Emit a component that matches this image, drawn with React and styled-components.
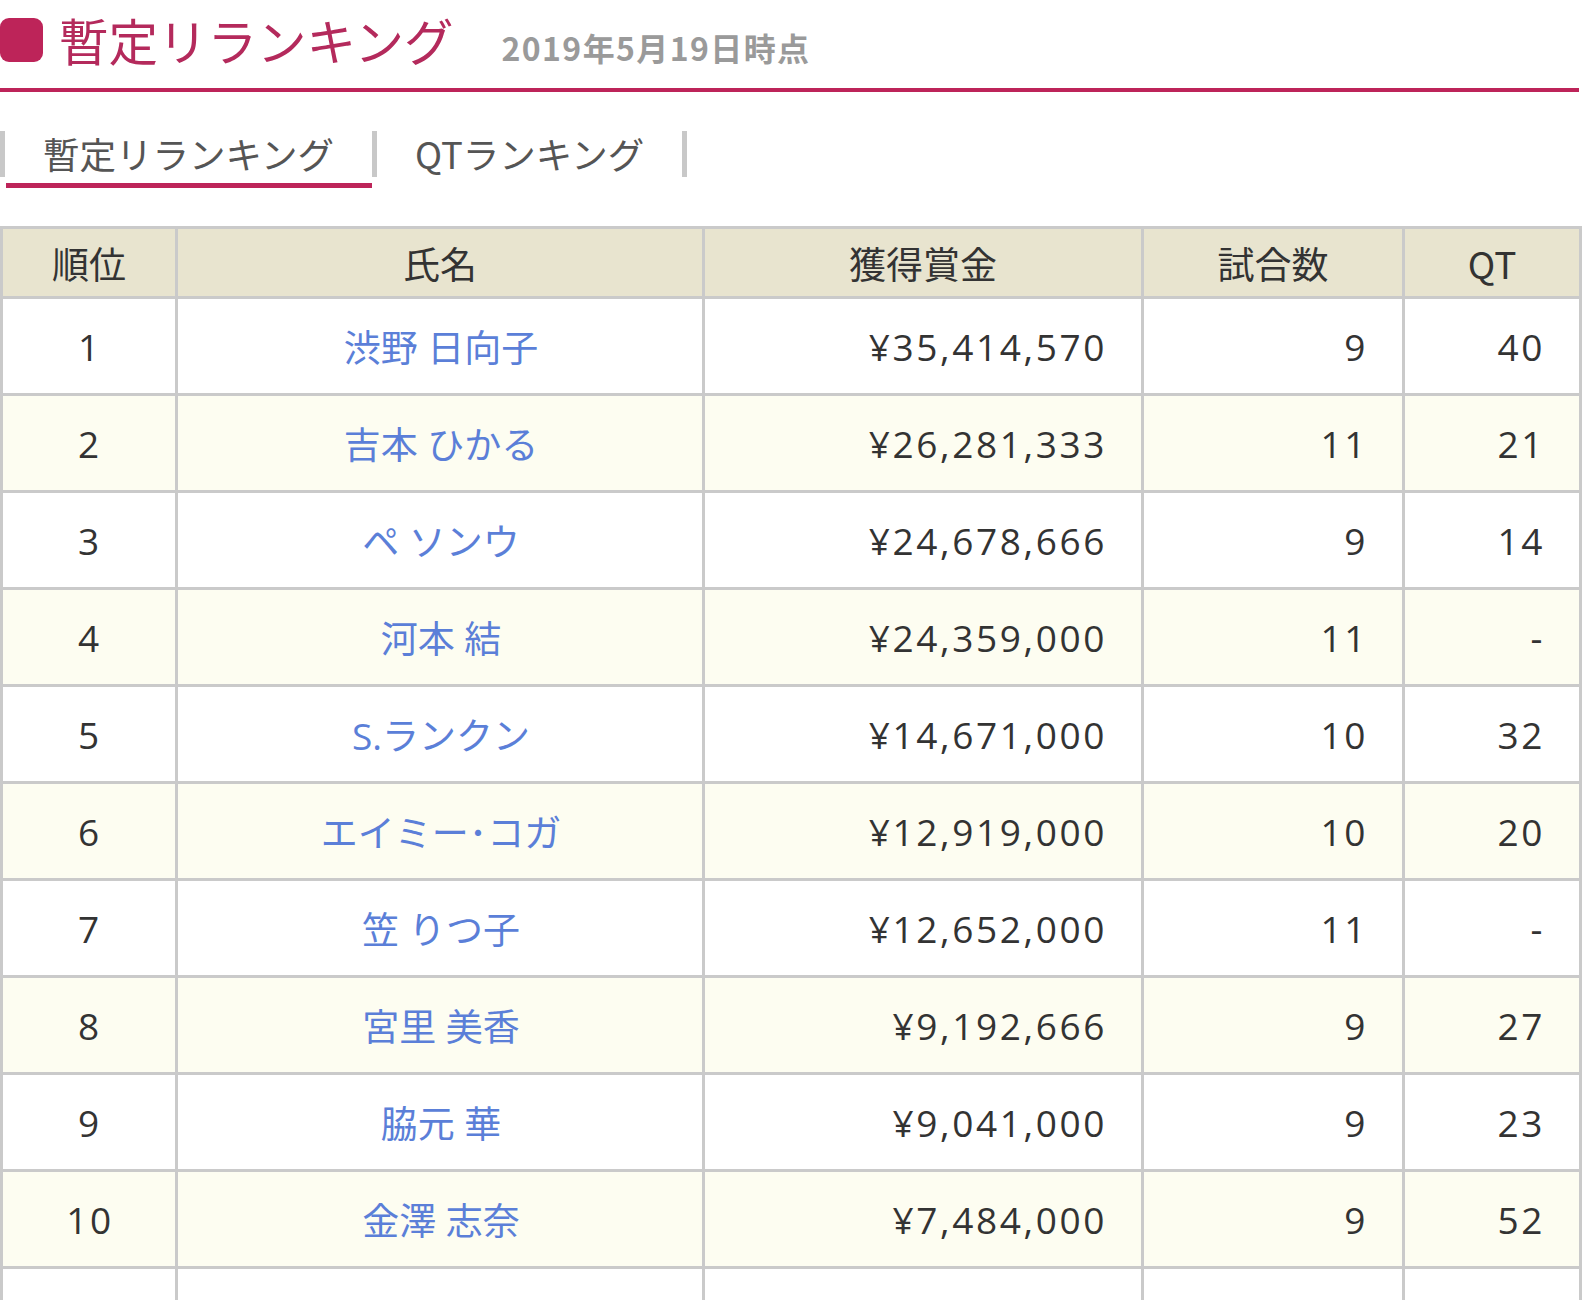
import React from "react";
import styled, { createGlobalStyle } from "styled-components";

const crimson = "#bd2459";

const GlobalStyle = createGlobalStyle`
	body {
		margin: 0;
		background: #fff;
		font-family: "Open Sans", "Noto Sans CJK JP", sans-serif;
		color: #333;
	}
`;

const Page = styled.div`
	width: 1579px;
`;

const Heading = styled.div`
	display: flex;
	align-items: center;
	height: 80px;
	padding-bottom: 8px;
	border-bottom: 4px solid ${crimson};
`;

const Mark = styled.span`
	width: 43px;
	height: 44px;
	border-radius: 9px;
	background: ${crimson};
	margin-right: 16px;
`;

const Title = styled.h1`
	margin: 0;
	font-family: "Noto Sans CJK JP", sans-serif;
	font-size: 49.5px;
	font-weight: 400;
	line-height: 1;
	color: #b42a5c;
`;

const Stamp = styled.span`
	margin-left: 48px;
	margin-top: 14px;
	font-family: "Noto Sans CJK JP", sans-serif;
	font-size: 32px;
	font-weight: 700;
	letter-spacing: 1.4px;
	color: #9a9a9a;
`;

const TabList = styled.div`
	display: flex;
	align-items: flex-start;
	margin-top: 39px;
`;

const Tab = styled.div`
	display: flex;
	flex-direction: column;
`;

const TabLabel = styled.span`
	display: block;
	height: 46px;
	line-height: 46px;
	padding: 0 38px 0 38px;
	border-left: 5px solid #c8c8c8;
	border-right: ${(p) => (p.$last ? "5px solid #c8c8c8" : "none")};
	font-family: "Noto Sans CJK JP", sans-serif;
	font-size: 36.5px;
	font-weight: 400;
	color: #555;
	white-space: nowrap;
`;

const TabBar = styled.span`
	display: block;
	height: 5px;
	margin: 6px 0 0 6px;
	background: ${(p) => (p.$active ? crimson : "transparent")};
`;

const Table = styled.table`
	margin-top: 38px;
	width: 1579px;
	border-collapse: collapse;
	table-layout: fixed;
	font-size: 37px;
`;

const Th = styled.th`
	height: 67px;
	padding: 0;
	background: #e8e4cf;
	border: 3px solid #cacaca;
	font-family: "Noto Sans CJK JP", sans-serif;
	font-weight: 400;
	color: #333;
	text-align: center;
`;

const Row = styled.tr`
	background: ${(p) => (p.$alt ? "#fdfdf1" : "#fff")};
`;

const Td = styled.td`
	height: 94px;
	padding: 0 34px 0 36px;
	border: 3px solid #cacaca;
	text-align: ${(p) => p.$align || "center"};
	letter-spacing: 2.6px;
	color: #333;
	white-space: nowrap;
`;

const NameLink = styled.a`
	color: #5b7fd8;
	text-decoration: none;
	letter-spacing: 0;
	font-family: "Open Sans", "Noto Sans CJK JP", sans-serif;
`;

const players = [
	["1", "渋野 日向子", "¥35,414,570", "9", "40"],
	["2", "吉本 ひかる", "¥26,281,333", "11", "21"],
	["3", "ペ ソンウ", "¥24,678,666", "9", "14"],
	["4", "河本 結", "¥24,359,000", "11", "-"],
	["5", "S.ランクン", "¥14,671,000", "10", "32"],
	["6", "エイミー･コガ", "¥12,919,000", "10", "20"],
	["7", "笠 りつ子", "¥12,652,000", "11", "-"],
	["8", "宮里 美香", "¥9,192,666", "9", "27"],
	["9", "脇元 華", "¥9,041,000", "9", "23"],
	["10", "金澤 志奈", "¥7,484,000", "9", "52"],
];

export default function App() {
	return (
		<Page>
			<GlobalStyle />
			<Heading>
				<Mark />
				<Title>暫定リランキング</Title>
				<Stamp>2019年5月19日時点</Stamp>
			</Heading>
			<TabList>
				<Tab>
					<TabLabel>暫定リランキング</TabLabel>
					<TabBar $active />
				</Tab>
				<Tab>
					<TabLabel $last>QTランキング</TabLabel>
					<TabBar />
				</Tab>
			</TabList>
			<Table>
				<colgroup>
					<col style={{ width: 175 }} />
					<col style={{ width: 527 }} />
					<col style={{ width: 439 }} />
					<col style={{ width: 261 }} />
					<col style={{ width: 177 }} />
				</colgroup>
				<thead>
					<tr>
						<Th>順位</Th>
						<Th>氏名</Th>
						<Th>獲得賞金</Th>
						<Th>試合数</Th>
						<Th>QT</Th>
					</tr>
				</thead>
				<tbody>
					{players.map((p, i) => (
						<Row key={p[0]} $alt={i % 2 === 1}>
							<Td>{p[0]}</Td>
							<Td>
								<NameLink href="#">{p[1]}</NameLink>
							</Td>
							<Td $align="right">{p[2]}</Td>
							<Td $align="right">{p[3]}</Td>
							<Td $align="right">{p[4]}</Td>
						</Row>
					))}
					<Row>
						<Td />
						<Td />
						<Td />
						<Td />
						<Td />
					</Row>
				</tbody>
			</Table>
		</Page>
	);
}
